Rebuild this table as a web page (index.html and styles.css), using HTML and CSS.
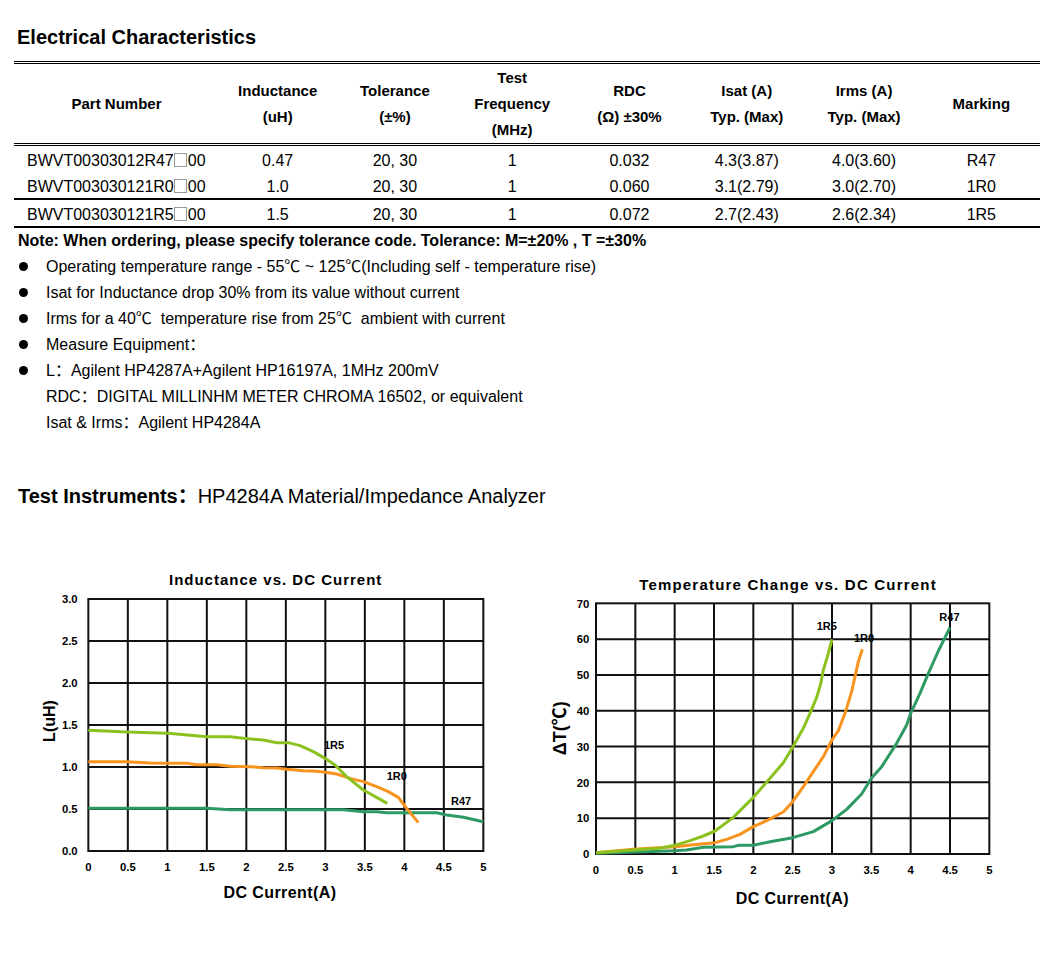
FILE: index.html
```html
<!DOCTYPE html>
<html lang="en">
<head>
<meta charset="utf-8">
<title>Electrical Characteristics</title>
<link rel="stylesheet" href="styles.css">
</head>
<body>
<div class="page">
  <h1 class="title">Electrical Characteristics</h1>
  <table class="spec">
    <colgroup>
      <col class="c-part"><col><col><col><col><col><col><col>
    </colgroup>
    <thead>
      <tr>
        <th>Part Number</th>
        <th>Inductance<br>(uH)</th>
        <th>Tolerance<br>(±%)</th>
        <th>Test<br>Frequency<br>(MHz)</th>
        <th>RDC<br>(Ω) ±30%</th>
        <th>Isat (A)<br>Typ. (Max)</th>
        <th>Irms (A)<br>Typ. (Max)</th>
        <th>Marking</th>
      </tr>
    </thead>
    <tbody>
      <tr>
        <td class="pn">BWVT00303012R47<span class="box"></span>00</td>
        <td>0.47</td><td>20, 30</td><td>1</td><td>0.032</td><td>4.3(3.87)</td><td>4.0(3.60)</td><td>R47</td>
      </tr>
      <tr class="sep">
        <td class="pn">BWVT003030121R0<span class="box"></span>00</td>
        <td>1.0</td><td>20, 30</td><td>1</td><td>0.060</td><td>3.1(2.79)</td><td>3.0(2.70)</td><td>1R0</td>
      </tr>
      <tr class="sep">
        <td class="pn">BWVT003030121R5<span class="box"></span>00</td>
        <td>1.5</td><td>20, 30</td><td>1</td><td>0.072</td><td>2.7(2.43)</td><td>2.6(2.34)</td><td>1R5</td>
      </tr>
    </tbody>
  </table>

  <p class="note">Note: When ordering, please specify tolerance code. Tolerance: M=±20% , T =±30%</p>
  <ul class="bullets">
    <li><span>Operating temperature range - 55℃ ~ 125℃(Including self - temperature rise)</span></li>
    <li><span>Isat for Inductance drop 30% from its value without current</span></li>
    <li><span>Irms for a 40℃&nbsp; temperature rise from 25℃&nbsp; ambient with current</span></li>
    <li><span>Measure Equipment：</span></li>
    <li><span>L：Agilent HP4287A+Agilent HP16197A, 1MHz 200mV<br>RDC：DIGITAL MILLINHM METER CHROMA 16502, or equivalent<br>Isat &amp; Irms：Agilent HP4284A</span></li>
  </ul>

  <h2 class="instr"><b>Test Instruments：</b>HP4284A Material/Impedance Analyzer</h2>

  <div class="charts">
    <svg class="chart chart-l" viewBox="0 0 1410 1050" width="470" height="350">
      <text class="ctitle" x="737" y="75" text-anchor="middle" letter-spacing="3">Inductance vs. DC Current</text>
      <g class="grid">
        <path d="M293.5 117V873M412 117V873M530.5 117V873M649 117V873M767.5 117V873M886 117V873M1004.5 117V873M1123 117V873M1241.5 117V873"/>
        <path d="M175 243H1360M175 369H1360M175 495H1360M175 621H1360M175 747H1360"/>
        <rect x="175" y="117" width="1185" height="756"/>
      </g>
      <g class="ytick" text-anchor="end">
        <text x="143" y="129">3.0</text>
        <text x="143" y="255">2.5</text>
        <text x="143" y="381">2.0</text>
        <text x="143" y="507">1.5</text>
        <text x="143" y="633">1.0</text>
        <text x="143" y="759">0.5</text>
        <text x="143" y="885">0.0</text>
      </g>
      <g class="ytick" text-anchor="middle">
        <text x="175" y="932">0</text>
        <text x="293.5" y="932">0.5</text>
        <text x="412" y="932">1</text>
        <text x="530.5" y="932">1.5</text>
        <text x="649" y="932">2</text>
        <text x="767.5" y="932">2.5</text>
        <text x="886" y="932">3</text>
        <text x="1004.5" y="932">3.5</text>
        <text x="1123" y="932">4</text>
        <text x="1241.5" y="932">4.5</text>
        <text x="1360" y="932">5</text>
      </g>
      <polyline class="c-r47" points="175,745 530,745 600,749 940,749 1000,755 1040,755 1070,758 1220,758 1250,765 1300,772 1360,785"/>
      <polyline class="c-1r0" points="175,605 290,605 360,609 415,610 470,610 500,614 560,614 600,619 660,620 700,623 740,624 770,628 820,632 860,634 886,637 920,642 960,655 1000,665 1040,680 1075,695 1105,712 1130,745 1165,788"/>
      <polyline class="c-1r5" points="175,511 290,516 415,520 530,530 600,530 640,535 700,540 740,548 775,548 810,557 850,575 885,595 915,615 950,650 1000,690 1072,730"/>
      <g class="clabel">
        <text x="882" y="568">1R5</text>
        <text x="1070" y="660">1R0</text>
        <text x="1263" y="735">R47</text>
      </g>
      <text class="axis" x="750" y="1015" text-anchor="middle" letter-spacing="1.3">DC Current(A)</text>
      <text class="axis" transform="translate(75,483) rotate(-90)" text-anchor="middle">L(uH)</text>
    </svg>

    <svg class="chart chart-r" viewBox="0 0 1380 1035" width="460" height="345">
      <text class="ctitle" x="714" y="61" text-anchor="middle" letter-spacing="3.6">Temperature Change vs. DC Current</text>
      <g class="grid">
        <path d="M256 100V852M374 100V852M492 100V852M610 100V852M728 100V852M846 100V852M964 100V852M1082 100V852M1200 100V852"/>
        <path d="M138 207.4H1318M138 314.9H1318M138 422.3H1318M138 529.7H1318M138 637.1H1318M138 744.6H1318"/>
        <rect x="138" y="100" width="1180" height="752"/>
      </g>
      <g class="ytick" text-anchor="end">
        <text x="118" y="113">70</text>
        <text x="118" y="220">60</text>
        <text x="118" y="328">50</text>
        <text x="118" y="435">40</text>
        <text x="118" y="542">30</text>
        <text x="118" y="650">20</text>
        <text x="118" y="757">10</text>
        <text x="118" y="865">0</text>
      </g>
      <g class="ytick" text-anchor="middle">
        <text x="138" y="912">0</text>
        <text x="256" y="912">0.5</text>
        <text x="374" y="912">1</text>
        <text x="492" y="912">1.5</text>
        <text x="610" y="912">2</text>
        <text x="728" y="912">2.5</text>
        <text x="846" y="912">3</text>
        <text x="964" y="912">3.5</text>
        <text x="1082" y="912">4</text>
        <text x="1200" y="912">4.5</text>
        <text x="1318" y="912">5</text>
      </g>
      <polyline class="c-r47" points="138,850 260,846 374,842 410,840 460,832 550,830 565,826 610,826 660,815 728,803 790,785 846,752 890,718 935,672 964,625 995,590 1040,520 1070,465 1082,430 1110,370 1135,310 1165,243 1200,172"/>
      <polyline class="c-1r0" points="138,848 250,838 374,830 430,824 495,818 530,808 570,793 610,770 650,752 700,726 728,695 760,650 790,605 820,560 846,510 865,482 885,430 905,365 915,320 925,275 937,238"/>
      <polyline class="c-1r5" points="138,848 250,840 330,835 374,826 420,812 460,798 495,783 550,742 610,682 660,625 700,578 730,528 760,475 780,430 800,382 812,342 820,300 835,250 846,208"/>
      <g class="clabel">
        <text x="800" y="180">1R5</text>
        <text x="912" y="215">1R0</text>
        <text x="1168" y="152">R47</text>
      </g>
      <text class="axis" x="727" y="1002" text-anchor="middle" letter-spacing="1.3">DC Current(A)</text>
      <text class="axis axis-dt" transform="translate(47,475) rotate(-90)" text-anchor="middle">ΔT(℃)</text>
    </svg>
  </div>
</div>
</body>
</html>
```

FILE: styles.css
```css
* {
  box-sizing: border-box;
}

body {
  margin: 0;
  background: #ffffff;
  color: #000000;
  font-family: "Liberation Sans", Arial, "Noto Sans CJK SC", sans-serif;
}

.page {
  padding-top: 25px;
}

.title {
  margin: 0 0 12px 17px;
  font-size: 20px;
  line-height: 24px;
  font-weight: bold;
}

.spec {
  margin-left: 14px;
  width: 1026px;
  table-layout: fixed;
  border-collapse: collapse;
  border-top: 3px double #000;
}

.spec .c-part {
  width: 205px;
}

.spec th {
  padding: 1px 0 0;
  font-size: 15px;
  line-height: 26px;
  font-weight: bold;
  text-align: center;
  vertical-align: middle;
}

.spec thead tr {
  border-bottom: 3px double #000;
}

.spec td {
  padding: 3px 0 0;
  font-size: 16px;
  line-height: 23px;
  text-align: center;
  white-space: nowrap;
}

.spec td.pn {
  text-align: left;
  padding-left: 13px;
}

.spec tr.sep {
  border-bottom: 2px solid #000;
}

.box {
  display: inline-block;
  width: 13px;
  height: 14px;
  border: 1px solid #9a9a9a;
  vertical-align: -1px;
  margin-right: 1px;
}

.note {
  margin: 0 0 0 18px;
  font-size: 16px;
  line-height: 26px;
  font-weight: bold;
}

.bullets {
  list-style: none;
  margin: 0 0 0 19px;
  padding: 0;
  font-size: 16px;
  line-height: 26px;
}

.bullets li {
  display: flex;
}

.bullets li::before {
  content: "";
  flex: none;
  width: 9px;
  height: 9px;
  margin: 8px 18px 0 0;
  border-radius: 50%;
  background: #000;
}

.instr {
  margin: 48px 0 0 18px;
  font-size: 20px;
  line-height: 24px;
  font-weight: normal;
}

.instr b {
  font-weight: bold;
}

.charts {
  display: flex;
  align-items: flex-start;
  margin: 52px 0 0 30px;
  gap: 50px;
}

.chart {
  display: block;
  flex: none;
}

.chart-r {
  margin-top: 10px;
}

.chart text {
  font-family: "Liberation Sans", Arial, "Noto Sans CJK SC", sans-serif;
  font-weight: bold;
  fill: #000;
}

.ctitle {
  font-size: 45px;
}

.ytick text {
  font-size: 34px;
}

.clabel text {
  font-size: 33px;
}

.axis {
  font-size: 48px;
}

.axis-dt {
  font-size: 54px;
}

.grid path,
.grid rect {
  fill: none;
  stroke: #111;
  stroke-width: 6;
}

.chart polyline {
  fill: none;
  stroke-width: 9;
  stroke-linejoin: round;
  stroke-linecap: butt;
}

.c-1r5 {
  stroke: #8cc21f;
}

.c-1r0 {
  stroke: #f7931e;
}

.c-r47 {
  stroke: #2e9a63;
}
```
